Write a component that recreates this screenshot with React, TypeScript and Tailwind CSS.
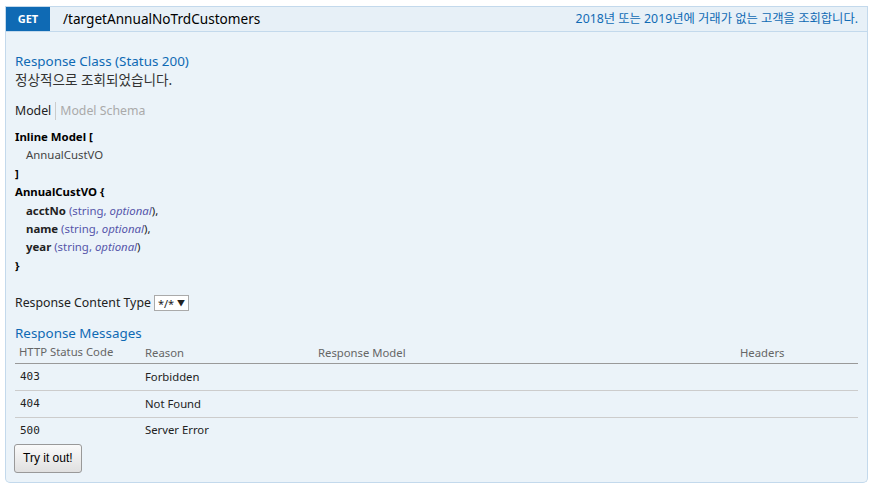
const sans = "font-['Noto_Sans','Noto_Sans_CJK_KR',sans-serif]";

const fields = [
  { name: "acctNo", last: false },
  { name: "name", last: false },
  { name: "year", last: true },
];

const messages = [
  { code: "403", reason: "Forbidden" },
  { code: "404", reason: "Not Found" },
  { code: "500", reason: "Server Error" },
];

export default function App() {
  return (
    <div className={`min-h-screen bg-white pl-[5px] pt-[6px] text-[#222] ${sans}`}>
      <div className="w-[863px]">
        {/* Header */}
        <div className="flex h-[26px] items-stretch border border-[#c3d9ec] bg-[#e7f0f7]">
          <div className="flex w-[44px] items-center justify-center bg-[#0f6ab4] text-[11px] font-bold text-white">
            GET
          </div>
          <div className="ml-[13px] flex items-center text-[13.6px] text-black">
            /targetAnnualNoTrdCustomers
          </div>
          <div className="ml-auto mr-[9px] flex items-center text-[12.3px] text-[#0f6ab4]">
            2018년 또는 2019년에 거래가 없는 고객을 조회합니다.
          </div>
        </div>

        {/* Body */}
        <div className="rounded-b-[5px] border border-t-0 border-[#c3d9ec] bg-[#ebf3f9] px-[9px] pb-[9px] pt-[19px]">
          <h4 className="text-[13.4px] leading-[20px] text-[#0f6ab4]">Response Class (Status 200)</h4>
          <p className="text-[13.6px] leading-[18px] text-[#333]">정상적으로 조회되었습니다.</p>

          <div className="mt-[13px] flex items-center text-[12.3px] leading-[18px]">
            <span className="pr-[4px]">Model</span>
            <span className="border-l border-[#ccc] pl-[4px] text-[#aaa]">Model Schema</span>
          </div>

          <div className="mt-[8px] text-[11.4px] leading-[18.4px]">
            <div className="font-bold text-black">Inline Model [</div>
            <div className="pl-[11px] text-[#444]">AnnualCustVO</div>
            <div className="font-bold text-black">]</div>
            <div className="font-bold text-black">AnnualCustVO {"{"}</div>
            {fields.map((f) => (
              <div key={f.name} className="pl-[11px]">
                <span className="font-bold">{f.name}</span>{" "}
                <span className="text-[#55a]">(string, </span>
                <span className="italic text-[#55a]">optional</span>
                <span>){f.last ? "" : ","}</span>
              </div>
            ))}
            <div className="font-bold text-black">{"}"}</div>
          </div>

          <div className="mt-[19px] flex items-center text-[12.3px] leading-[18px]">
            <span>Response Content Type</span>
            <span className="ml-[3px] flex h-[16px] w-[35px] items-center justify-between border border-[#aaa] bg-white px-[3px] text-[11px] leading-none">
              <span>*/*</span>
              <span className="text-[8px]">▼</span>
            </span>
          </div>

          <h4 className="mt-[11px] text-[13.4px] leading-[20px] text-[#0f6ab4]">Response Messages</h4>

          <table className="w-full border-collapse text-[11.3px]">
            <thead>
              <tr className="border-b border-[#999] text-left text-[#666]">
                <th className="w-[130px] px-[4px] pb-[2px] pt-[1px] font-normal">HTTP Status Code</th>
                <th className="w-[173px] px-[0px] font-normal">Reason</th>
                <th className="px-[0px] font-normal">Response Model</th>
                <th className="w-[118px] px-[0px] font-normal">Headers</th>
              </tr>
            </thead>
            <tbody>
              {messages.map((m, i) => (
                <tr key={m.code} className={i < messages.length - 1 ? "border-b border-[#ccc]" : ""}>
                  <td className={`${i < messages.length - 1 ? "h-[27px]" : "h-[26px]"} px-[5px] font-['DejaVu_Sans_Mono',monospace] text-[11px]`}>
                    {m.code}
                  </td>
                  <td>{m.reason}</td>
                  <td></td>
                  <td></td>
                </tr>
              ))}
            </tbody>
          </table>

          <button className="ml-[-1px] block h-[29px] rounded-[3px] border border-[#999] bg-gradient-to-b from-[#fafafa] to-[#e0e0e0] px-[8px] font-['Liberation_Sans',sans-serif] text-[12px] text-black">
            Try it out!
          </button>
        </div>
      </div>
    </div>
  );
}
